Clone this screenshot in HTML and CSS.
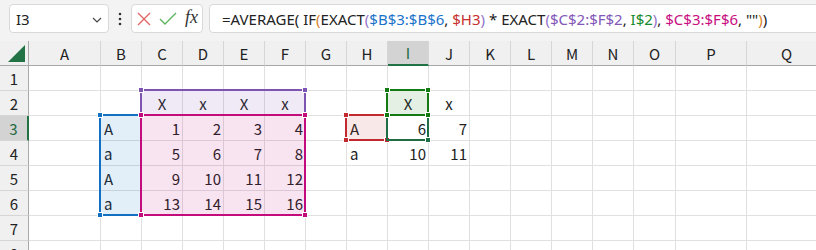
FILE: index.html
```html
<!DOCTYPE html>
<html lang="ja">

<head>
  <meta charset="UTF-8">
  <meta name="viewport" content="width=device-width, initial-scale=1.0">
  <title>AVERAGE IF EXACT</title>
  <link rel="stylesheet" href="styles.css">
</head>

<body>
  <div class="bar">
    <div class="namebox">
      <span>I3</span>
      <svg class="chev" width="10" height="6" viewBox="0 0 10 6"><polyline points="1,1 5,5 9,1" fill="none" stroke="#444" stroke-width="1.2"/></svg>
    </div>
    <div class="dots">
      <svg width="4" height="14" viewBox="0 0 4 14"><circle cx="2" cy="2" r="1.3" fill="#333"/><circle cx="2" cy="7" r="1.3" fill="#333"/><circle cx="2" cy="12" r="1.3" fill="#333"/></svg>
    </div>
    <div class="btns">
      <svg width="14" height="14" viewBox="0 0 14 14"><path d="M1 1 L13 13 M13 1 L1 13" stroke="#e36666" stroke-width="1.4" fill="none"/></svg>
      <svg width="18" height="14" viewBox="0 0 18 14"><polyline points="1,7 6,12 17,1" stroke="#5cb45c" stroke-width="1.4" fill="none"/></svg>
      <span class="fx">fx</span>
    </div>
    <div class="formula">
      <span>=AVERAGE( IF</span><span class="p-or">(</span><span>EXACT</span><span class="p-pu">(</span><span class="f-bl">$B$3:$B$6</span><span>, </span><span class="f-rd">$H3</span><span class="p-pu">)</span><span> * EXACT</span><span class="p-pu">(</span><span class="f-pu">$C$2:$F$2</span><span>, </span><span class="f-gr">I$2</span><span class="p-pu">)</span><span>, </span><span class="f-mg">$C$3:$F$6</span><span>, ""</span><span class="p-or">)</span><span>)</span>
    </div>
  </div>

  <div class="sheet">
    <div class="grid" id="grid"></div>

    <div class="rng blue" style="left:99px; top:73px; width:43px; height:102px">
      <i class="hdl tl"></i><i class="hdl tr"></i><i class="hdl bl"></i><i class="hdl br"></i>
    </div>
    <div class="rng purple" style="left:140px; top:48px; width:166px; height:27px">
      <i class="hdl tl"></i><i class="hdl tr"></i><i class="hdl bl"></i><i class="hdl br"></i>
    </div>
    <div class="rng magenta" style="left:140px; top:73px; width:166px; height:102px">
      <i class="hdl tl"></i><i class="hdl tr"></i><i class="hdl bl"></i><i class="hdl br"></i>
    </div>
    <div class="rng red" style="left:345px; top:73px; width:43px; height:27px">
      <i class="hdl tl"></i><i class="hdl tr"></i><i class="hdl bl"></i><i class="hdl br"></i>
    </div>
    <div class="rng active" style="left:386px; top:73px; width:43px; height:27px">
      <i class="hdl br"></i>
    </div>
    <div class="rng green" style="left:386px; top:48px; width:43px; height:27px">
      <i class="hdl tl"></i><i class="hdl tr"></i><i class="hdl bl"></i><i class="hdl br"></i>
    </div>
  </div>

  <script>
    // 列と値
    const cols = 'ABCDEFGHIJKLMNOPQ'.split('');
    const values = {
      C2: 'X', D2: 'x', E2: 'X', F2: 'x', I2: 'X', J2: 'x',
      B3: 'A', C3: 1, D3: 2, E3: 3, F3: 4, H3: 'A', I3: 6, J3: 7,
      B4: 'a', C4: 5, D4: 6, E4: 7, F4: 8, H4: 'a', I4: 10, J4: 11,
      B5: 'A', C5: 9, D5: 10, E5: 11, F5: 12,
      B6: 'a', C6: 13, D6: 14, E6: 15, F6: 16
    };

    const grid = document.getElementById('grid');
    let html = '<div class="corner"><svg width="18" height="18" viewBox="0 0 18 18"><polygon points="17,0 17,17 0,17" fill="#217346"/></svg></div>';
    cols.forEach(c => {
      html += '<div class="hd' + (c === 'I' ? ' sel' : '') + '">' + c + '</div>';
    });
    for (let r = 1; r <= 8; r++) {
      html += '<div class="rh' + (r === 3 ? ' sel' : '') + '">' + r + '</div>';
      cols.forEach(c => {
        const v = values[c + r];
        let cls = 'c';
        if (typeof v === 'number') cls += ' num';
        else if (r === 2) cls += ' ctr';
        html += '<div class="' + cls + '">' + (v === undefined ? '' : v) + '</div>';
      });
    }
    grid.innerHTML = html;
  </script>
</body>

</html>
```

FILE: styles.css
```css
body {
  margin: 0;
  width: 816px;
  height: 250px;
  overflow: hidden;
  background: #f3f3f3;
  font-family: "Noto Sans CJK JP", "Noto Sans", sans-serif;
  color: #222;
}

/* 数式バー */
.bar {
  display: flex;
  align-items: flex-start;
  height: 41px;
  padding: 4px 0 0 9px;
  box-sizing: border-box;
}

.namebox,
.btns,
.formula {
  height: 29px;
  box-sizing: border-box;
  background: #fff;
  border: 1px solid #d9d9d9;
  border-radius: 4px;
}

.namebox {
  display: flex;
  align-items: center;
  justify-content: space-between;
  width: 100px;
  padding: 0 6px 0 6px;
  font-family: "Noto Sans", sans-serif;
  font-size: 15px;
}

.chev {
  margin-top: 2px;
}

.dots {
  display: flex;
  justify-content: center;
  align-items: center;
  width: 22px;
  height: 29px;
}

.btns {
  display: flex;
  align-items: center;
  gap: 8px;
  width: 72px;
  padding-left: 5px;
}

.fx {
  font-family: "Liberation Serif", serif;
  font-style: italic;
  font-size: 18px;
  color: #333;
  margin-top: -2px;
}

.formula {
  flex: 1;
  display: flex;
  align-items: center;
  margin-left: 6px;
  margin-right: -10px;
  padding-left: 12px;
  font-family: "Noto Sans", sans-serif;
  font-size: 15px;
  white-space: pre;
}

.f-bl { color: #1a73c9; }
.f-rd { color: #c6302f; }
.f-pu { color: #8257b8; }
.f-gr { color: #178a2c; }
.f-mg { color: #c70d7f; }
.p-pu { color: #9474c9; }
.p-or { color: #d9822b; }

/* シート */
.sheet {
  position: relative;
}

.grid {
  display: grid;
  grid-template-columns: 29px 72px repeat(13, 41px) 42px 71px 80px;
  grid-auto-rows: 25px;
  background: #fff;
  font-size: 15px;
}

.grid > div {
  box-sizing: border-box;
  display: flex;
  align-items: center;
  overflow: hidden;
  white-space: nowrap;
}

.corner {
  background: #f0f0f0;
  border-right: 1px solid #a8a8a8;
  border-bottom: 1px solid #a8a8a8;
  justify-content: flex-end;
  padding: 2px 2px 0 0;
}

.hd {
  justify-content: center;
  background: #f0f0f0;
  border-right: 1px solid #d6d6d6;
  border-bottom: 1px solid #a8a8a8;
}

.hd.sel {
  background: #d3d3d3;
  color: #1d6b44;
  border-bottom: 2px solid #217346;
}

.rh {
  justify-content: center;
  background: #f0f0f0;
  border-right: 1px solid #a8a8a8;
  border-bottom: 1px solid #d6d6d6;
}

.rh.sel {
  background: #d3d3d3;
  color: #1d6b44;
  border-right: 2px solid #217346;
}

.c {
  border-right: 1px solid #e0e0e0;
  border-bottom: 1px solid #e0e0e0;
  padding: 0 3px;
}

.c.num {
  justify-content: flex-end;
  padding-right: 2px;
}

.c.ctr {
  justify-content: center;
}

/* 参照範囲の枠 */
.rng {
  position: absolute;
  box-sizing: border-box;
  border: 2px solid currentColor;
}

.hdl {
  position: absolute;
  width: 4px;
  height: 4px;
  border: 1px solid #fff;
  background: currentColor;
}

.hdl.tl { left: -4px; top: -4px; }
.hdl.tr { right: -4px; top: -4px; }
.hdl.bl { left: -4px; bottom: -4px; }
.hdl.br { right: -4px; bottom: -4px; }

.blue { color: #1170c2; background: rgba(17, 112, 194, 0.12); }
.purple { color: #7d55b0; background: rgba(125, 85, 176, 0.12); }
.magenta { color: #c30b7c; background: rgba(195, 11, 124, 0.11); }
.red { color: #c1292e; background: rgba(193, 41, 46, 0.11); }
.green { color: #137a13; background: rgba(19, 122, 19, 0.11); }
.active { color: #1f6e43; }
```
